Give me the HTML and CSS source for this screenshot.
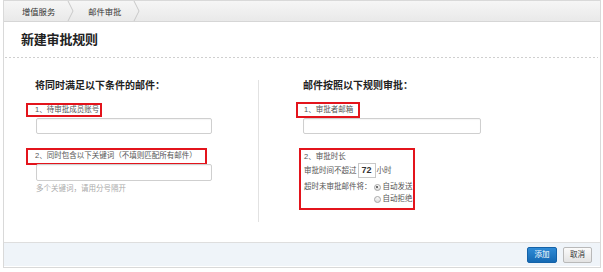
FILE: index.html
```html
<!DOCTYPE html>
<html lang="zh-CN">
<head>
<meta charset="utf-8">
<title>新建审批规则</title>
<link rel="stylesheet" href="styles.css">
</head>
<body>
<div class="panel">
  <div class="crumbs">
    <span class="crumb first">增值服务</span>
    <svg class="chev" width="7" height="20" viewBox="0 0 7 20"><path d="M1 0 L6 10 L1 20" fill="none" stroke="#c8c8c8" stroke-width="1"/></svg>
    <span class="crumb">邮件审批</span>
    <svg class="chev" width="7" height="20" viewBox="0 0 7 20"><path d="M1 0 L6 10 L1 20" fill="none" stroke="#c8c8c8" stroke-width="1"/></svg>
  </div>
  <div class="title">新建审批规则</div>
  <div class="dots"></div>
  <div class="content">
    <div class="col col-left">
      <div class="heading">将同时满足以下条件的邮件：</div>
      <div class="redbox rb1">1、待审批成员账号</div>
      <div class="input in1"></div>
      <div class="redbox rb2">2、同时包含以下关键词（不填则匹配所有邮件）</div>
      <div class="input in2"></div>
      <div class="hint">多个关键词，请用分号隔开</div>
    </div>
    <div class="col col-right">
      <div class="heading">邮件按照以下规则审批：</div>
      <div class="redbox rb3">1、审批者邮箱</div>
      <div class="input in3"></div>
      <div class="redbox rb4">
        <div class="line l1">2、审批时长</div>
        <div class="line l2">审批时间不超过<span class="num">72</span>小时</div>
        <div class="line l3">
          <span class="lab">超时未审批邮件将：</span>
          <div class="opts">
            <div class="opt"><span class="radio checked"></span>自动发送</div>
            <div class="opt"><span class="radio"></span>自动拒绝</div>
          </div>
        </div>
      </div>
    </div>
  </div>
  <div class="footer">
    <span class="btn primary">添加</span>
    <span class="btn">取消</span>
  </div>
</div>
</body>
</html>
```
FILE: styles.css
```css
* { box-sizing: border-box; }
html, body { margin: 0; padding: 0; background: #fff; }
body {
  font-family: "Liberation Sans", "Noto Sans CJK SC", sans-serif;
  color: #444;
}
.panel {
  margin: 0 2px 0 3px;
  border: 1px solid #d9d9d9;
  height: 268px;
  background: #fff;
}
.crumbs {
  height: 21px;
  display: flex;
  align-items: center;
  background: linear-gradient(#f6f6f6, #e9e9e9);
  border-bottom: 1px solid #d6d6d6;
  font-size: 8.3px;
  color: #333;
}
.crumb { padding: 0 12px 0 14px; }
.crumb.first { padding-left: 18px; }
.chev { display: block; }
.title {
  padding: 10px 0 9px 17px;
  font-size: 13px;
  line-height: 16px;
  font-weight: bold;
  color: #222;
  letter-spacing: -0.2px;
}
.dots {
  height: 1px;
  margin: 0 2px 0 1px;
  background: repeating-linear-gradient(to right, #cfcfcf 0 2px, transparent 2px 4px);
}
.content {
  display: flex;
  height: 184px;
  padding-top: 22px;
}
.col { height: 142px; }
.col-left {
  margin-left: 22px;
  width: 233px;
  border-right: 1px solid #e2e2e2;
}
.col-right { flex: 1; }
.heading {
  font-size: 10px;
  line-height: 12px;
  font-weight: bold;
  color: #222;
  height: 12px;
}
.col-left .heading { margin-left: 9px; }
.col-right .heading { margin-left: 44px; }
.redbox {
  border: 2px solid #e3141c;
  font-size: 7.5px;
  line-height: 10px;
  color: #555;
}
.rb1 {
  margin-top: 11px;
  width: 76px;
  height: 14px;
  padding-left: 7px;
}
.rb2 {
  margin-top: 14px;
  width: 181px;
  height: 17px;
  padding: 1px 0 0 7px;
}
.input {
  height: 16px;
  border: 1px solid #cfcfcf;
  border-radius: 2px;
  background: #fff;
  box-shadow: inset 0 1px 1px rgba(0,0,0,0.04);
}
.in1 { margin: 1px 0 0 10px; width: 176px; }
.in2 { margin: -1px 0 0 10px; width: 176px; height: 17px; }
.hint {
  margin: 3px 0 0 10px;
  font-size: 7.5px;
  line-height: 10px;
  color: #aaa;
}
.rb3 {
  margin: 10px 0 0 37px;
  width: 64px;
  height: 16px;
  padding: 1px 0 0 6px;
}
.in3 { margin: 0 0 0 44px; width: 178px; }
.rb4 {
  margin: 14px 0 0 40px;
  width: 116px;
  height: 62px;
  padding: 1px 0 0 3px;
}
.line { display: flex; align-items: center; }
.l1 { height: 11px; }
.l2 { height: 17px; }
.num {
  display: inline-block;
  width: 18px;
  height: 15px;
  margin: 0 1px;
  border: 1px solid #c8c8c8;
  text-align: center;
  font-size: 9px;
  line-height: 13px;
  font-weight: bold;
  color: #333;
}
.l3 { align-items: flex-start; margin-top: 2px; }
.lab { line-height: 12px; }
.opts { display: flex; flex-direction: column; margin-left: 2px; }
.opt { display: flex; align-items: center; height: 12px; }
.radio {
  width: 7px;
  height: 7px;
  border-radius: 50%;
  border: 1px solid #a6a6a6;
  background: linear-gradient(#fafafa, #dcdcdc);
  margin-right: 2px;
  position: relative;
}
.radio.checked::after {
  content: "";
  position: absolute;
  left: 1.5px;
  top: 1.5px;
  width: 2px;
  height: 2px;
  border-radius: 50%;
  background: #444;
}
.footer {
  height: 24px;
  border-top: 1px solid #dedede;
  background: #eff4f9;
  display: flex;
  justify-content: flex-end;
  align-items: flex-start;
  padding: 4px 8px 0 0;
  gap: 6px;
}
.btn {
  display: inline-block;
  height: 16px;
  width: 29px;
  border: 1px solid #b9b9b9;
  border-radius: 2px;
  background: linear-gradient(#fbfbfb, #e3e3e3);
  font-size: 7.5px;
  line-height: 14px;
  text-align: center;
  color: #333;
}
.btn.primary {
  width: 30px;
  border-color: #1462a8;
  background: linear-gradient(#2f8bd6, #1569b3);
  color: #fff;
}
```
